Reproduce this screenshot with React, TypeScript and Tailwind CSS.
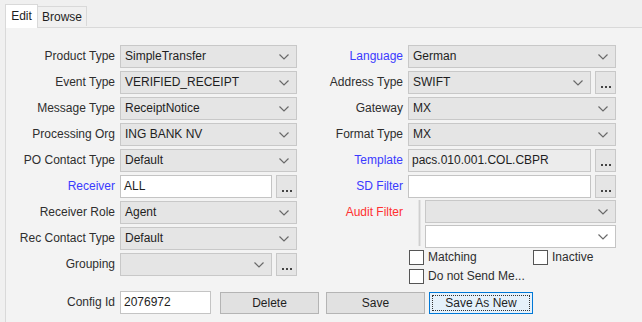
import React from "react";

const Chevron = () => (
  <svg width="10" height="6" viewBox="0 0 10 6" className="shrink-0">
    <polyline points="0.5,0.5 5,5 9.5,0.5" fill="none" stroke="#6a6a6a" strokeWidth="1.2" />
  </svg>
);

const Combo = ({ value = "", w, white = false }: { value?: string; w: string; white?: boolean }) => (
  <div
    className={`${w} h-[23px] flex items-center justify-between pl-[4px] pr-[7px] border ${
      white ? "bg-white border-[#c4c4c4]" : "bg-[#e5e5e5] border-[#c8c8c8]"
    }`}
  >
    <span className="whitespace-nowrap leading-[15px] text-[#1e1e1e]">{value}</span>
    <Chevron />
  </div>
);

const Field = ({ value = "", w, gray = false }: { value?: string; w: string; gray?: boolean }) => (
  <div
    className={`${w} h-[23px] flex items-center pl-[3px] border ${
      gray ? "bg-[#ececec] border-[#c8c8c8]" : "bg-white border-[#c4c4c4]"
    }`}
  >
    <span className="whitespace-nowrap leading-[15px] text-[#1e1e1e]">{value}</span>
  </div>
);

const Dots = () => (
  <div className="w-[21px] h-[23px] bg-[#e5e5e5] border border-[#c8c8c8] flex items-end justify-center pb-[5px] gap-[2px]">
    <span className="w-[2px] h-[2px] bg-[#444]" />
    <span className="w-[2px] h-[2px] bg-[#444]" />
    <span className="w-[2px] h-[2px] bg-[#444]" />
  </div>
);

const Label = ({ text, w, color = "text-[#2e2e2e]" }: { text: string; w: string; color?: string }) => (
  <div className={`${w} shrink-0 text-right pr-[5px] whitespace-nowrap leading-[15px] ${color}`}>{text}</div>
);

const Row = ({ children }: { children: React.ReactNode }) => (
  <div className="flex items-center h-[23px]">{children}</div>
);

const CheckBox = ({ label }: { label: string }) => (
  <div className="flex items-center h-[15px]">
    <div className="w-[15px] h-[15px] bg-white border border-[#555]" />
    <span className="ml-[4px] text-[#2e2e2e] whitespace-nowrap leading-[15px]">{label}</span>
  </div>
);

const Button = ({ text, w, focused = false }: { text: string; w: string; focused?: boolean }) => (
  <div
    className={`${w} h-[22px] flex items-center justify-center border ${
      focused ? "bg-[#e5f1fb] border-[#0078d7]" : "bg-[#e1e1e1] border-[#b4b4b4]"
    }`}
  >
    {focused ? (
      <div className="w-[calc(100%-4px)] h-[calc(100%-4px)] border border-dotted border-[#333] flex items-center justify-center text-[#1e1e1e]">
        {text}
      </div>
    ) : (
      <span className="text-[#1e1e1e]">{text}</span>
    )}
  </div>
);

export default function App() {
  const L = "w-[114px]";
  const R = "w-[111px]";
  return (
    <div
      className="w-[642px] h-[322px] bg-[#f0f0f0] overflow-hidden text-[12px] leading-none"
      style={{ fontFamily: '"Liberation Sans", Arial, sans-serif' }}
    >
      {/* tabs */}
      <div className="h-[27px] pl-[5px] flex items-end relative z-10">
        <div className="w-[33px] h-[24px] bg-white border border-b-0 border-[#d9d9d9] flex items-center justify-center text-[#1e1e1e] mb-[-1px] pb-[2px]">
          Edit
        </div>
        <div className="w-[49px] h-[20px] bg-[#f0f0f0] border border-l-0 border-b-0 border-[#d9d9d9] flex items-center justify-center text-[#1e1e1e] mb-[1px]">
          Browse
        </div>
      </div>
      {/* panel */}
      <div className="ml-[5px] h-[295px] border-l border-t border-[#d9d9d9] bg-[#f3f3f3]">
        <div className="flex pt-[17px]">
          {/* left column */}
          <div className="w-[291px] flex flex-col gap-[3px]">
            <Row>
              <Label text="Product Type" w={L} />
              <Combo value="SimpleTransfer" w="w-[177px]" />
            </Row>
            <Row>
              <Label text="Event Type" w={L} />
              <Combo value="VERIFIED_RECEIPT" w="w-[177px]" />
            </Row>
            <Row>
              <Label text="Message Type" w={L} />
              <Combo value="ReceiptNotice" w="w-[177px]" />
            </Row>
            <Row>
              <Label text="Processing Org" w={L} />
              <Combo value="ING BANK NV" w="w-[177px]" />
            </Row>
            <Row>
              <Label text="PO Contact Type" w={L} />
              <Combo value="Default" w="w-[177px]" />
            </Row>
            <Row>
              <Label text="Receiver" w={L} color="text-[#3a3aff]" />
              <div className="flex gap-[4px]">
                <Field value="ALL" w="w-[152px]" />
                <Dots />
              </div>
            </Row>
            <Row>
              <Label text="Receiver Role" w={L} />
              <Combo value="Agent" w="w-[177px]" />
            </Row>
            <Row>
              <Label text="Rec Contact Type" w={L} />
              <Combo value="Default" w="w-[177px]" />
            </Row>
            <Row>
              <Label text="Grouping" w={L} />
              <div className="flex gap-[4px]">
                <Combo w="w-[152px]" />
                <Dots />
              </div>
            </Row>
          </div>
          {/* right column */}
          <div className="flex flex-col">
            <div className="flex flex-col gap-[3px]">
              <Row>
                <Label text="Language" w={R} color="text-[#3a3aff]" />
                <Combo value="German" w="w-[208px]" />
              </Row>
              <Row>
                <Label text="Address Type" w={R} />
                <div className="flex gap-[4px]">
                  <Combo value="SWIFT" w="w-[183px]" />
                  <Dots />
                </div>
              </Row>
              <Row>
                <Label text="Gateway" w={R} />
                <Combo value="MX" w="w-[208px]" />
              </Row>
              <Row>
                <Label text="Format Type" w={R} />
                <Combo value="MX" w="w-[208px]" />
              </Row>
              <Row>
                <Label text="Template" w={R} color="text-[#3a3aff]" />
                <div className="flex gap-[4px]">
                  <Field value="pacs.010.001.COL.CBPR" w="w-[183px]" gray />
                  <Dots />
                </div>
              </Row>
              <Row>
                <Label text="SD Filter" w={R} color="text-[#3a3aff]" />
                <div className="flex gap-[4px]">
                  <Field w="w-[183px]" />
                  <Dots />
                </div>
              </Row>
            </div>
            <div className="flex mt-[2px]">
              <div className="w-[111px] shrink-0 text-right pr-[5px] pt-[5px] leading-[15px] text-[#ff3030] whitespace-nowrap">
                Audit Filter
              </div>
              <div className="flex">
                <div className="ml-[10px] w-[3px] h-[46px] bg-[#cfcfcf] border-x border-[#e4e4e4]" />
                <div className="ml-[4px] flex flex-col gap-[2px]">
                  <Combo w="w-[191px]" />
                  <Combo w="w-[191px]" white />
                </div>
              </div>
            </div>
            <div className="ml-[112px] mt-[2px] flex flex-col gap-[4px]">
              <div className="flex">
                <div className="w-[124px]">
                  <CheckBox label="Matching" />
                </div>
                <CheckBox label="Inactive" />
              </div>
              <CheckBox label="Do not Send Me..." />
            </div>
          </div>
        </div>
        {/* bottom row */}
        <div className="flex items-center mt-[7px]">
          <Label text="Config Id" w={L} />
          <Field value="2076972" w="w-[91px]" />
          <div className="ml-[9px]">
            <Button text="Delete" w="w-[99px]" />
          </div>
          <div className="ml-[7px]">
            <Button text="Save" w="w-[99px]" />
          </div>
          <div className="ml-[4px]">
            <Button text="Save As New" w="w-[104px]" focused />
          </div>
        </div>
      </div>
    </div>
  );
}
